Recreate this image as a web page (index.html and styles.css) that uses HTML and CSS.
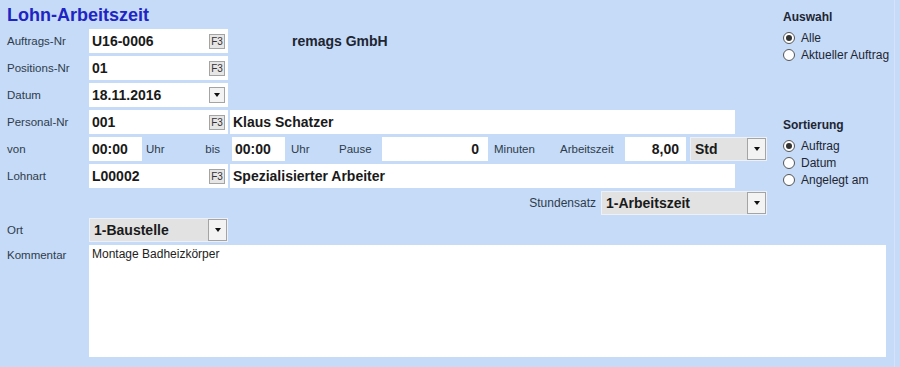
FILE: index.html
```html
<!DOCTYPE html>
<html lang="de">
<head>
    <meta charset="UTF-8">
    <meta name="viewport" content="width=device-width, initial-scale=1.0">
    <title>Lohn-Arbeitszeit</title>
    <link rel="stylesheet" href="styles.css">
</head>
<body>
    <div class="window">
        <div class="top">
            <div class="main">
                <h1 class="title">Lohn-Arbeitszeit</h1>

                <div class="row">
                    <span class="lbl">Auftrags-Nr</span>
                    <div class="field code"><span class="val">U16-0006</span><span class="f3">F3</span></div>
                    <span class="company">remags GmbH</span>
                </div>

                <div class="row">
                    <span class="lbl">Positions-Nr</span>
                    <div class="field code"><span class="val">01</span><span class="f3">F3</span></div>
                </div>

                <div class="row">
                    <span class="lbl">Datum</span>
                    <div class="field code"><span class="val">18.11.2016</span><span class="drop small"></span></div>
                </div>

                <div class="row">
                    <span class="lbl">Personal-Nr</span>
                    <div class="field code"><span class="val">001</span><span class="f3">F3</span></div>
                    <div class="field wide">Klaus Schatzer</div>
                </div>

                <div class="row">
                    <span class="lbl">von</span>
                    <div class="field time">00:00</div>
                    <div class="units"><span>Uhr</span><span>bis</span></div>
                    <div class="field time second">00:00</div>
                    <span class="unit unit-uhr">Uhr</span>
                    <span class="unit unit-pause">Pause</span>
                    <div class="field num pause">0</div>
                    <span class="unit unit-min">Minuten</span>
                    <span class="unit unit-az">Arbeitszeit</span>
                    <div class="field num hours">8,00</div>
                    <div class="select std"><span class="txt">Std</span><span class="drop"></span></div>
                </div>

                <div class="row">
                    <span class="lbl">Lohnart</span>
                    <div class="field code"><span class="val">L00002</span><span class="f3">F3</span></div>
                    <div class="field wide">Spezialisierter Arbeiter</div>
                </div>

                <div class="row right">
                    <span class="rate-lbl">Stundensatz</span>
                    <div class="select rate"><span class="txt">1-Arbeitszeit</span><span class="drop"></span></div>
                </div>
            </div>

            <div class="side">
                <div class="grp-title">Auswahl</div>
                <div class="radios">
                    <div class="radio"><span class="dot checked"></span>Alle</div>
                    <div class="radio"><span class="dot"></span>Aktueller Auftrag</div>
                </div>

                <div class="grp-title sort">Sortierung</div>
                <div class="radios">
                    <div class="radio"><span class="dot checked"></span>Auftrag</div>
                    <div class="radio"><span class="dot"></span>Datum</div>
                    <div class="radio"><span class="dot"></span>Angelegt am</div>
                </div>
            </div>
        </div>

        <div class="bottom">
            <div class="row">
                <span class="lbl">Ort</span>
                <div class="select ort"><span class="txt">1-Baustelle</span><span class="drop"></span></div>
            </div>
            <div class="row comment-row">
                <span class="lbl top-lbl">Kommentar</span>
                <div class="comment">Montage Badheizkörper</div>
            </div>
        </div>
    </div>
</body>
</html>
```

FILE: styles.css
```css
:root {
    --bg-color: #c5dbf7;
    --title-color: #1f24c4;
    --label-color: #2f3b4c;
    --value-color: #1a1a1a;
    --button-border: #a4a4a4;
}

body {
    margin: 0;
    background-color: var(--bg-color);
    font-family: "Liberation Sans", Arial, sans-serif;
    color: var(--label-color);
}

.window {
    width: 894px;
    height: 367px;
    border-right: 1px solid #d3e3f8;
}

.top {
    display: flex;
}

.main {
    width: 760px;
    padding-left: 7px;
}

.title {
    margin: 4px 0 0;
    font-size: 18px;
    line-height: 22px;
    font-weight: bold;
    color: var(--title-color);
}

.row {
    display: flex;
    height: 24px;
    margin-top: 3px;
}

.row.right {
    justify-content: flex-end;
}

.lbl {
    width: 82px;
    font-size: 11.5px;
    display: flex;
    align-items: center;
}

.field {
    box-sizing: border-box;
    display: flex;
    align-items: center;
    padding: 0 3px;
    background-color: #fff;
    font-size: 14px;
    font-weight: bold;
    color: var(--value-color);
}

.code {
    width: 139px;
}

.val {
    flex: 1;
}

.f3 {
    box-sizing: border-box;
    width: 16px;
    height: 15px;
    display: flex;
    align-items: center;
    justify-content: center;
    border: 1px solid var(--button-border);
    background-color: #e6e6e6;
    font-size: 10px;
    font-weight: normal;
    color: #333;
}

.wide {
    width: 505px;
    margin-left: 2px;
}

.company {
    margin-left: 64px;
    display: flex;
    align-items: center;
    font-size: 14px;
    font-weight: bold;
    color: #1e2533;
}

/* von / bis row */
.time {
    width: 53px;
}

.time.second {
    margin-left: 3px;
}

.units {
    box-sizing: border-box;
    width: 87px;
    display: flex;
    align-items: center;
    justify-content: space-between;
    padding: 0 9px 0 4px;
    font-size: 11.5px;
}

.unit {
    display: flex;
    align-items: center;
    font-size: 11.5px;
}

.unit-uhr {
    margin-left: 6px;
    width: 48px;
}

.unit-pause {
    width: 43px;
}

.unit-min {
    margin-left: 6px;
    width: 66px;
}

.unit-az {
    width: 65px;
}

.num {
    justify-content: flex-end;
}

.pause {
    width: 106px;
    padding-right: 9px;
}

.hours {
    width: 61px;
    padding-right: 7px;
}

/* dropdowns */
.select {
    box-sizing: border-box;
    display: flex;
    background-color: #e2e2e2;
    border: 1px solid #edf1f7;
    font-size: 14px;
    font-weight: bold;
    color: var(--value-color);
}

.select .txt {
    flex: 1;
    display: flex;
    align-items: center;
    padding-left: 4px;
}

.drop {
    box-sizing: border-box;
    width: 19px;
    display: flex;
    align-items: center;
    justify-content: center;
    border: 1px solid var(--button-border);
    background-color: #f3f3f3;
}

.drop::after {
    content: "";
    border-left: 3.5px solid transparent;
    border-right: 3.5px solid transparent;
    border-top: 4px solid #111;
}

.drop.small {
    width: 16px;
    height: 16px;
}

.std {
    width: 77px;
    margin-left: 4px;
}

.rate-lbl {
    display: flex;
    align-items: center;
    margin-right: 5px;
    font-size: 12px;
}

.rate {
    width: 166px;
}

.ort {
    width: 139px;
}

/* right column */
.side {
    margin-left: 16px;
    padding-top: 10px;
    color: #1e2533;
}

.grp-title {
    font-size: 12px;
    line-height: 15px;
    font-weight: bold;
}

.grp-title.sort {
    margin-top: 55px;
}

.radios {
    margin-top: 4px;
}

.radio {
    display: flex;
    align-items: center;
    height: 17px;
    font-size: 12px;
}

.dot {
    box-sizing: border-box;
    width: 12px;
    height: 12px;
    margin-right: 6px;
    display: flex;
    align-items: center;
    justify-content: center;
    border: 1px solid #555;
    border-radius: 50%;
    background-color: #fff;
}

.dot.checked::after {
    content: "";
    width: 6px;
    height: 6px;
    border-radius: 50%;
    background-color: #333;
}

/* bottom */
.bottom {
    padding-left: 7px;
}

.comment-row {
    height: 112px;
}

.top-lbl {
    align-items: flex-start;
    padding-top: 4px;
}

.comment {
    box-sizing: border-box;
    width: 797px;
    padding: 2px 3px;
    background-color: #fff;
    font-size: 12px;
    color: #222;
}
```
